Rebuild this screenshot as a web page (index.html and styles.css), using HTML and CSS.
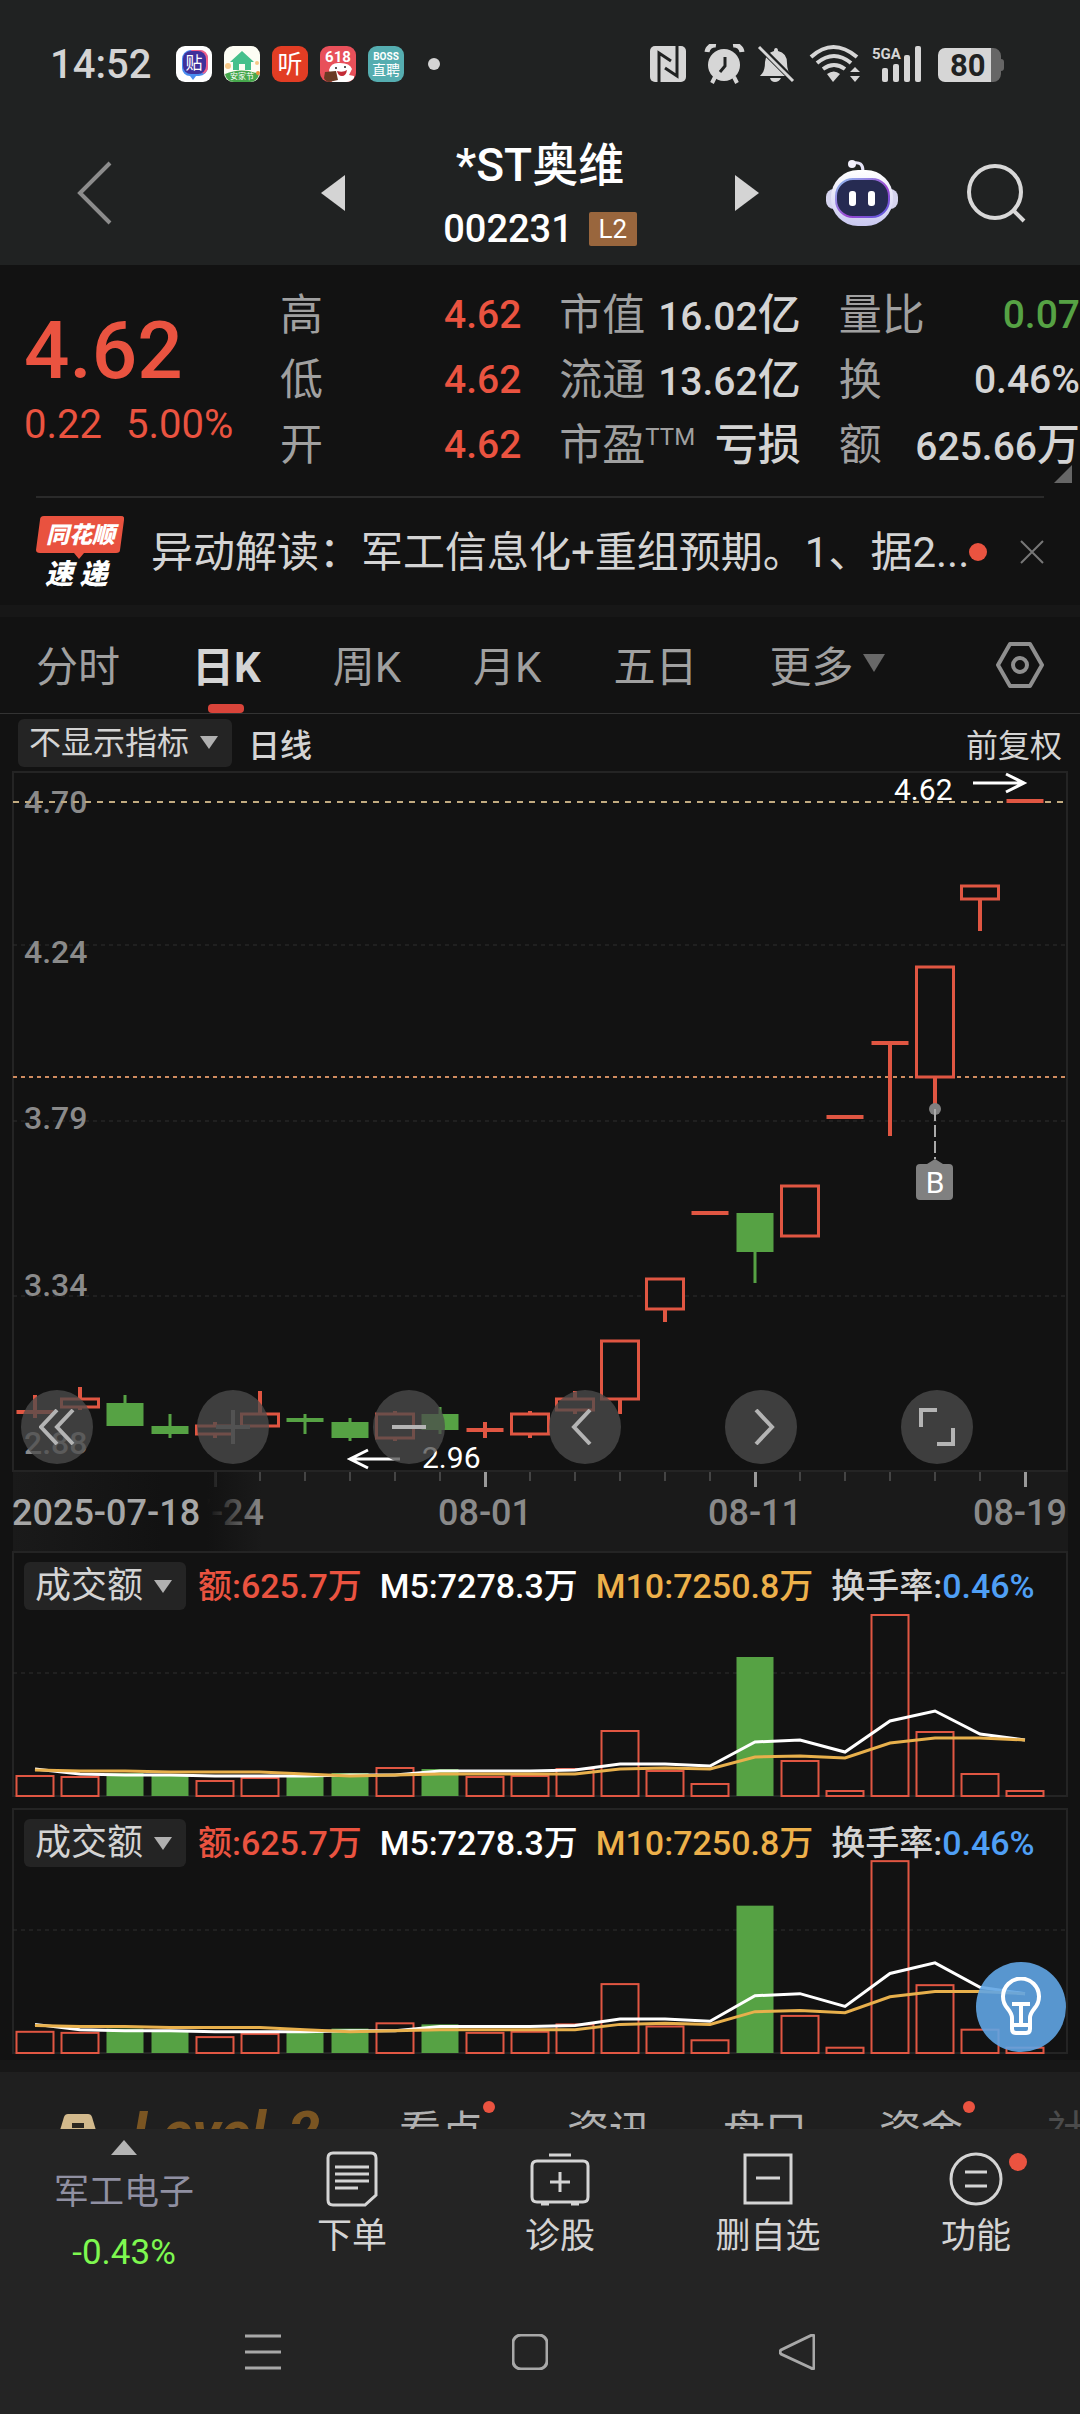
FILE: index.html
```html
<!DOCTYPE html>
<html lang="zh-CN">

<head>
  <meta charset="UTF-8">
  <meta name="viewport" content="width=device-width, initial-scale=1.0">
  <title>*ST奥维 002231</title>
  <link rel="stylesheet" href="styles.css">
</head>

<body>
  <div class="status-bar">
    <span class="status-bar__time">14:52</span>
    <div class="status-bar__apps">
      <svg width="36" height="36" viewBox="0 0 36 36">
        <rect width="36" height="36" rx="9" fill="#fff" />
        <path d="M14 4h9a9 9 0 0 1 9 9v8a9 9 0 0 1-9 9h-3l-3 4-3-4a8 8 0 0 1-8-8v-9a9 9 0 0 1 8-9z" fill="#4a8df0" />
        <path d="M15 4h9a8 8 0 0 1 8 8v8a8 8 0 0 1-5 8z" fill="#f0608a" />
        <rect x="7" y="5" width="23" height="23" rx="8" fill="#40309a" />
        <text class="app-text" x="18" y="23" font-size="17">贴</text>
      </svg>
      <svg width="36" height="36" viewBox="0 0 36 36">
        <rect width="36" height="36" rx="9" fill="#fdfdf4" />
        <path d="M1 28q16-7 34 0a9 9 0 0 1-9 8H10a9 9 0 0 1-9-8z" fill="#46a84c" />
        <path d="M18 5l12 11h-3v8h-6v-6h-6v6H9v-8H6z" fill="#45c08c" />
        <circle cx="4" cy="20" r="3" fill="#f7c887" />
        <circle cx="33" cy="17" r="2" fill="#f7c887" />
        <circle cx="34" cy="27" r="2" fill="#e8923a" />
        <text class="app-text" x="18" y="33" font-size="8">安家节</text>
      </svg>
      <svg width="36" height="36" viewBox="0 0 36 36">
        <rect width="36" height="36" rx="9" fill="#e23d24" />
        <text class="app-text" x="18" y="27" font-size="25">听</text>
      </svg>
      <svg width="36" height="36" viewBox="0 0 36 36">
        <rect width="36" height="36" rx="9" fill="#e8505a" />
        <text class="app-text app-text--latin" x="18" y="16" font-size="15">618</text>
        <path d="M9 24q2-8 11-7 10 0 12 6l-3 6 5 1v2q-3 4-8 4H12z" fill="#fff" />
        <path d="M17 25q6 2 10-1-1 6-5 6-4 0-5-5z" fill="#c22a35" />
        <circle cx="16" cy="22" r="1" fill="#222" />
        <circle cx="25" cy="21" r="1" fill="#222" />
        <path d="M5 26l11-1 2 9-9 2q-4-1-5-4z" fill="#6a3a24" />
      </svg>
      <svg width="36" height="36" viewBox="0 0 36 36">
        <rect width="36" height="36" rx="9" fill="#55adb0" />
        <text class="app-text app-text--latin" x="18" y="14" font-size="10">BOSS</text>
        <text class="app-text" x="18" y="29" font-size="14">直聘</text>
      </svg>
    </div>
    <span class="status-bar__dot"></span>
    <svg class="status-bar__system" width="356" height="40" viewBox="0 0 356 40" fill="#d6d6d6">
      <rect x="0" y="2" width="36" height="36" rx="5" />
      <path d="M9 38V9l12 8M27 2v30l-12-8" fill="none" stroke="#202222" stroke-width="3" />
      <path d="M57 8a8 8 0 0 1 9-7M92 8a8 8 0 0 0-9-7" fill="none" stroke="#d6d6d6" stroke-width="5" />
      <circle cx="74" cy="21" r="16" />
      <path d="M65 33l-3 6M84 33l3 6" stroke="#d6d6d6" stroke-width="4" />
      <path d="M75 13v9l-5 6" fill="none" stroke="#202222" stroke-width="3" />
      <path d="M110 32q5-4 5-14 1-9 9-11 0-3 2-3t2 3q9 2 9 12 0 9 5 13zM120 34h11q-2 4-6 4t-5-4z" />
      <path d="M108 1l36 36" stroke="#202222" stroke-width="6" />
      <path d="M109 3l34 34" stroke="#d6d6d6" stroke-width="3" />
      <path d="M161 13q22-20 46 0M167 19q17-14 34 0M173 25q11-8 22 0" fill="none" stroke="#d6d6d6" stroke-width="4" />
      <path d="M177 30q7-5 13 0l-7 8zM205 23l5 5h-10zM205 38l5-6h-10z" />
      <text x="222" y="15" font-size="15" font-weight="700">5GA</text>
      <rect x="232" y="24" width="6" height="14" rx="2" />
      <rect x="243" y="20" width="6" height="18" rx="2" />
      <rect x="254" y="11" width="6" height="27" rx="2" />
      <rect x="265" y="2" width="6" height="36" rx="2" />
      <path d="M338 4h5a8 8 0 0 1 8 8v3q3 0 3 3v6q0 3-3 3v3a8 8 0 0 1-8 8h-5z" fill="#666" />
      <path d="M295 4h46v34h-46a7 7 0 0 1-7-7V11a7 7 0 0 1 7-7z" />
      <text x="300" y="32" font-size="31" font-weight="700" fill="#202222">80</text>
    </svg>
  </div>

  <header class="title-bar">
    <button class="icon-button title-bar__back" type="button" aria-label="返回">
      <svg width="36" height="64" viewBox="0 0 36 64">
        <path d="M34 2L4 32l30 30" fill="none" stroke="#8c8c8c" stroke-width="4" />
      </svg>
    </button>
    <div class="title-bar__stock">
      <button class="icon-button" type="button" aria-label="上一只">
        <svg width="24" height="36" viewBox="0 0 24 36"><path d="M24 0v36L0 18z" fill="#d4d4d4" /></svg>
      </button>
      <div class="title-bar__text">
        <h1 class="title-bar__name">*ST奥维</h1>
        <p class="title-bar__code">002231<span class="title-bar__level">L2</span></p>
      </div>
      <button class="icon-button" type="button" aria-label="下一只">
        <svg width="24" height="36" viewBox="0 0 24 36"><path d="M0 0v36l24-18z" fill="#d4d4d4" /></svg>
      </button>
    </div>
    <div class="title-bar__actions">
      <button class="icon-button" type="button" aria-label="智能助手">
        <svg width="72" height="68" viewBox="0 0 72 68">
          <defs>
            <linearGradient id="shell" x1="0" y1="0" x2="0" y2="1">
              <stop offset="0" stop-color="#fff" />
              <stop offset="1" stop-color="#c9c8f0" />
            </linearGradient>
            <linearGradient id="rim" x1="0" y1="0" x2="1" y2="1">
              <stop offset="0" stop-color="#8fc0f0" />
              <stop offset="0.6" stop-color="#9a45d0" />
              <stop offset="1" stop-color="#5560e0" />
            </linearGradient>
          </defs>
          <path d="M27 4q10-2 10 8" fill="none" stroke="#e4e2f6" stroke-width="3" />
          <circle cx="26" cy="5" r="4" fill="#f2f0fc" />
          <rect x="0" y="30" width="72" height="20" rx="8" fill="#d5d4ee" />
          <rect x="5" y="11" width="62" height="56" rx="27" fill="url(#shell)" />
          <rect x="10" y="20" width="53" height="38" rx="17" fill="#262b52" stroke="url(#rim)" stroke-width="2" />
          <rect x="23" y="32" width="7" height="15" rx="3" fill="#fff" />
          <rect x="42" y="32" width="7" height="15" rx="3" fill="#fff" />
        </svg>
      </button>
      <button class="icon-button" type="button" aria-label="搜索">
        <svg width="60" height="60" viewBox="0 0 60 60" fill="none" stroke="#d8d8d8" stroke-width="4">
          <circle cx="29" cy="29" r="26" />
          <path d="M47 47l11 11" />
        </svg>
      </button>
    </div>
  </header>

  <section class="quote">
    <div class="quote__main">
      <p class="quote__price">4.62</p>
      <p class="quote__change"><span>0.22</span><span>5.00%</span></p>
    </div>
    <dl class="quote__stats">
      <div class="stat"><dt>高</dt><dd class="up">4.62</dd></div>
      <div class="stat"><dt>市值</dt><dd>16.02<span class="stat__unit">亿</span></dd></div>
      <div class="stat"><dt>量比</dt><dd class="down">0.07</dd></div>
      <div class="stat"><dt>低</dt><dd class="up">4.62</dd></div>
      <div class="stat"><dt>流通</dt><dd>13.62<span class="stat__unit">亿</span></dd></div>
      <div class="stat"><dt>换</dt><dd>0.46%</dd></div>
      <div class="stat"><dt>开</dt><dd class="up">4.62</dd></div>
      <div class="stat"><dt>市盈<sup>TTM</sup></dt><dd><span class="stat__unit">亏损</span></dd></div>
      <div class="stat"><dt>额</dt><dd>625.66<span class="stat__unit">万</span></dd></div>
    </dl>
    <span class="quote__expand"></span>
  </section>

  <section class="news">
    <svg class="news__logo" width="88" height="72" viewBox="0 0 88 72">
      <path d="M8 0h77q4 0 3 4l-4 30q0 3-4 3H48l-5 6-5-6H4q-4 0-4-3L4 4q0-4 4-4z" fill="#e9523f" />
      <text class="news__brand" x="10" y="27" font-size="23">同花顺</text>
      <text class="news__brand" x="9" y="68" font-size="28">速 递</text>
    </svg>
    <a class="news__text" href="#">异动解读：军工信息化+重组预期。1、据2...</a>
    <span class="news__dot"></span>
    <button class="icon-button" type="button" aria-label="关闭">
      <svg width="24" height="24" viewBox="0 0 24 24"><path d="M1 1l22 22M23 1L1 23" stroke="#777" stroke-width="2" /></svg>
    </button>
  </section>

  <nav class="tabs">
    <button class="tabs__item" type="button">分时</button>
    <button class="tabs__item tabs__item--active" type="button">日K</button>
    <button class="tabs__item" type="button">周K</button>
    <button class="tabs__item" type="button">月K</button>
    <button class="tabs__item" type="button">五日</button>
    <button class="tabs__item tabs__item--more" type="button">更多</button>
    <button class="icon-button tabs__settings" type="button" aria-label="设置">
      <svg width="48" height="46" viewBox="0 0 48 46" fill="none" stroke="#8f8f8f" stroke-width="4">
        <path d="M14 2h20l12 21-12 21H14L2 23z" stroke-linejoin="round" />
        <circle cx="24" cy="23" r="7" />
      </svg>
    </button>
  </nav>

  <div class="toolbar">
    <span class="dropdown dropdown--small">
      <select aria-label="指标"><option>不显示指标</option></select>
    </span>
    <strong class="toolbar__period">日线</strong>
    <button class="toolbar__adjust" type="button">前复权</button>
  </div>

  <section class="chart">
    <svg class="chart__plot" viewBox="0 0 1080 701">
      <rect class="frame" x="13" y="1" width="1054" height="699" />
      <g class="grid">
        <line x1="13" x2="1067" y1="174" y2="174" />
        <line x1="13" x2="1067" y1="350" y2="350" />
        <line x1="13" x2="1067" y1="525" y2="525" />
      </g>
      <g class="price-label">
        <text x="24" y="42">4.70</text>
        <text x="24" y="192">4.24</text>
        <text x="24" y="358">3.79</text>
        <text x="24" y="525">3.34</text>
        <text x="24" y="683">2.88</text>
      </g>
      <line class="level level--high" x1="13" x2="1067" y1="31" y2="31" />
      <line class="level level--cost" x1="13" x2="1067" y1="306" y2="306" />
      <g id="candles"></g>
      <g class="callout">
        <text x="894" y="29">4.62</text>
        <path d="M973 12h50M1006 3l18 9-18 9" />
        <text x="422" y="697">2.96</text>
        <path d="M400 688h-50M368 679l-18 9 18 9" />
      </g>
      <g class="buy">
        <circle cx="935" cy="338" r="6" />
        <line x1="935" x2="935" y1="338" y2="388" />
        <path d="M927 393l8-5 8 5h6q4 0 4 4v28q0 4-4 4h-29q-4 0-4-4v-28q0-4 4-4z" />
        <text x="935" y="422">B</text>
      </g>
    </svg>
    <div class="chart__controls">
      <button type="button" aria-label="最早"><svg width="36" height="36" viewBox="0 0 36 36"><path d="M18 1L2 18l16 17M34 1L18 18l16 17" /></svg></button>
      <button type="button" aria-label="放大" disabled><svg width="36" height="36" viewBox="0 0 36 36"><path d="M18 1v34M1 18h34" /></svg></button>
      <button type="button" aria-label="缩小"><svg width="36" height="36" viewBox="0 0 36 36"><path d="M1 18h34" /></svg></button>
      <button type="button" aria-label="左移"><svg width="36" height="36" viewBox="0 0 36 36"><path d="M23 1L7 18l16 17" /></svg></button>
      <button type="button" aria-label="右移"><svg width="36" height="36" viewBox="0 0 36 36"><path d="M13 1l16 17-16 17" /></svg></button>
      <button type="button" aria-label="全屏"><svg width="38" height="38" viewBox="0 0 38 38"><path d="M3 19V2h16M35 20v16H19" /></svg></button>
    </div>
  </section>

  <svg class="axis" viewBox="0 0 1080 79">
    <defs>
      <linearGradient id="axis-fade">
        <stop offset="0" stop-color="#1a1a1a" />
        <stop offset="0.6" stop-color="#121212" />
        <stop offset="0.78" stop-color="#121212" />
        <stop offset="1" stop-color="#121212" stop-opacity="0" />
      </linearGradient>
    </defs>
    <rect x="13" y="0" width="1055" height="79" fill="#1a1a1a" />
    <g id="ticks"></g>
    <text x="217" y="53" text-anchor="middle">07-24</text>
    <rect x="13" y="0" width="249" height="79" fill="url(#axis-fade)" />
    <text class="axis__start" x="12" y="53">2025-07-18</text>
    <text x="485" y="53" text-anchor="middle">08-01</text>
    <text x="755" y="53" text-anchor="middle">08-11</text>
    <text x="1067" y="53" text-anchor="end">08-19</text>
  </svg>

  <section class="volume">
    <svg class="volume__plot" viewBox="0 0 1080 246" data-scale="1"></svg>
    <div class="volume__head">
      <span class="dropdown">
        <select aria-label="副图一"><option>成交额</option></select>
      </span>
      <span class="up">额:625.7万</span>
      <span class="volume__m5">M5:7278.3万</span>
      <span class="volume__m10">M10:7250.8万</span>
      <span>换手率:<span class="volume__rate">0.46%</span></span>
    </div>
  </section>

  <section class="volume volume--last">
    <svg class="volume__plot" viewBox="0 0 1080 246" data-scale="1.06"></svg>
    <div class="volume__head">
      <span class="dropdown">
        <select aria-label="副图二"><option>成交额</option></select>
      </span>
      <span class="up">额:625.7万</span>
      <span class="volume__m5">M5:7278.3万</span>
      <span class="volume__m10">M10:7250.8万</span>
      <span>换手率:<span class="volume__rate">0.46%</span></span>
    </div>
    <button class="tip" type="button" aria-label="提示">
      <svg width="42" height="60" viewBox="0 0 42 60" fill="none" stroke="#fff" stroke-width="4">
        <path d="M12 52V41q0-4-4-9a18 18 0 1 1 26 0q-4 5-4 9v11q0 4-4 4H16q-4 0-4-4zM12 48h18M12 27h18M21 27v19" />
      </svg>
    </button>
  </section>

  <nav class="sections">
    <a class="sections__level" href="#">
      <svg width="40" height="40" viewBox="0 0 40 40"><path d="M10 0h20q3 0 4 3l6 20-20 17L0 23 6 3q1-3 4-3z" fill="#d2b98c" /><path d="M14 9h12v5H14z" fill="#2b2720" /></svg>
      <span>Level-2</span>
    </a>
    <a class="sections__item sections__item--new" href="#">看点</a>
    <a class="sections__item" href="#">资讯</a>
    <a class="sections__item" href="#">盘口</a>
    <a class="sections__item sections__item--new" href="#">资金</a>
    <a class="sections__item sections__item--faded" href="#">社区</a>
  </nav>

  <footer class="bottom">
    <div class="actions">
      <button class="actions__sector" type="button">
        <span class="actions__arrow"></span>
        <span>军工电子</span>
        <span class="actions__percent">-0.43%</span>
      </button>
      <button class="actions__item" type="button">
        <svg width="54" height="56" viewBox="0 0 54 56">
          <path d="M8 2h38q5 0 5 5v37l-11 10H8q-5 0-5-5V7q0-5 5-5zM10 16h34M10 23h34M10 30h34M10 37h23" />
        </svg>
        下单
      </button>
      <button class="actions__item" type="button">
        <svg width="60" height="56" viewBox="0 0 60 56">
          <path d="M7 10h46q5 0 5 5v31q0 5-5 5H7q-5 0-5-5V15q0-5 5-5zM19 4h22M11 53h8M41 53h8M30 21v20M20 31h20" />
        </svg>
        诊股
      </button>
      <button class="actions__item" type="button">
        <svg width="54" height="56" viewBox="0 0 54 56">
          <path d="M4 4h46v48H4zM15 27h24" />
        </svg>
        删自选
      </button>
      <button class="actions__item actions__item--new" type="button">
        <svg width="54" height="56" viewBox="0 0 54 56">
          <circle cx="27" cy="28" r="25" />
          <path d="M16 21h22M16 35h22" />
        </svg>
        功能
      </button>
    </div>
    <div class="system-nav">
      <button class="icon-button" type="button" aria-label="最近任务">
        <svg width="36" height="36" viewBox="0 0 36 36"><path d="M0 2h36M0 18h36M0 34h36" /></svg>
      </button>
      <button class="icon-button" type="button" aria-label="主屏幕">
        <svg width="36" height="36" viewBox="0 0 36 36"><rect x="1" y="1" width="34" height="34" rx="8" /></svg>
      </button>
      <button class="icon-button" type="button" aria-label="后退">
        <svg width="36" height="36" viewBox="0 0 36 36"><path d="M33 1q2 0 2 2v30q0 3-3 1L2 20q-2-2 0-4z" /></svg>
      </button>
    </div>
  </footer>

  <script>
    const firstX = 35;
    const step = 45;
    const barWidth = 37;

    // [rising, body top, body bottom, high, low]
    const candles = [
      [1, 641, 641, 624, 647], [1, 628, 636, 616, 639], [0, 632, 655, 624, 655],
      [0, 655, 663, 643, 667], [1, 655, 663, 651, 667], [1, 643, 655, 620, 655],
      [0, 647, 651, 643, 663], [0, 651, 667, 647, 670], [1, 643, 667, 640, 670],
      [0, 643, 659, 636, 663], [1, 659, 659, 651, 667], [1, 643, 663, 640, 667],
      [1, 628, 639, 620, 643], [1, 570, 628, 570, 643], [1, 508, 538, 508, 551],
      [1, 442, 442, 442, 442], [0, 442, 481, 442, 512], [1, 415, 465, 415, 465],
      [1, 346, 346, 346, 346], [1, 272, 272, 272, 365], [1, 196, 306, 196, 338],
      [1, 115, 128, 115, 160], [1, 30, 30, 30, 30]
    ];

    const volumes = [20, 19, 23, 20, 15, 18, 21, 23, 28, 27, 19, 20, 27, 65, 25, 12, 139, 35, 5, 181, 64, 22, 5];
    const m5 = [27, 22, 21, 21, 20, 20, 20, 21, 21, 25, 25, 25, 26, 32, 32, 30, 54, 56, 44, 75, 85, 62, 56];
    const m10 = [26, 25, 25, 24, 24, 24, 22, 20, 21, 22, 22, 22, 22, 27, 28, 27, 39, 40, 38, 53, 58, 58, 56];

    const centerX = (index) => firstX + step * index;

    function drawCandle([rising, top, bottom, high, low], index) {
      const x = centerX(index);
      const left = x - barWidth / 2;
      const className = rising ? "bar--up" : "bar--down";
      const body = top === bottom
        ? `<line x1="${left}" x2="${left + barWidth}" y1="${top}" y2="${top}" />`
        : `<rect x="${left}" y="${top}" width="${barWidth}" height="${bottom - top}" />`;
      return `<g class="${className}">
        ${high < top ? `<line x1="${x}" x2="${x}" y1="${high}" y2="${top}" />` : ""}
        ${low > bottom ? `<line x1="${x}" x2="${x}" y1="${bottom}" y2="${low}" />` : ""}
        ${body}
      </g>`;
    }

    function drawVolume(svg) {
      const scale = Number(svg.dataset.scale);
      const base = 245;
      const points = (values) => values.map((v, i) => `${centerX(i)},${base - v * scale}`).join(" ");
      const bars = volumes.map((v, i) => {
        const height = v * scale;
        const className = candles[i][0] ? "bar--up" : "bar--down";
        return `<rect class="${className}" x="${centerX(i) - barWidth / 2}" y="${base - height}" width="${barWidth}" height="${height}" />`;
      });
      svg.innerHTML = `
        <rect class="frame" x="13" y="1" width="1054" height="244" />
        <line class="grid" x1="13" x2="1067" y1="122" y2="122" />
        <g class="volume__bars">${bars.join("")}</g>
        <polyline class="line line--m5" points="${points(m5)}" />
        <polyline class="line line--m10" points="${points(m10)}" />`;
    }

    function drawTicks() {
      let ticks = "";
      for (let i = 4; i < candles.length; i++) {
        const major = (i - 4) % 6 === 0;
        ticks += `<rect x="${centerX(i) - 1}" y="0" width="${major ? 3 : 2}" height="${major ? 15 : 9}" fill="${major ? "#999" : "#444"}" />`;
      }
      return ticks;
    }

    document.querySelector("#candles").innerHTML = candles.map(drawCandle).join("");
    document.querySelector("#ticks").innerHTML = drawTicks();
    document.querySelectorAll(".volume__plot").forEach(drawVolume);
  </script>
</body>

</html>
```

FILE: styles.css
```css
:root {
  --red: #ea5340;
  --green: #56a244;
  --text: #d4d4d4;
  --muted: #a0a0a0;
  --bg: #121212;
  --frame: #242424;
}

* {
  box-sizing: border-box;
}

body {
  margin: 0;
  background-color: var(--bg);
  color: var(--text);
  font-family: Roboto, "Noto Sans CJK SC", sans-serif;
}

h1,
p,
dl,
dd {
  margin: 0;
}

button,
select {
  padding: 0;
  border: 0;
  background: none;
  color: inherit;
  font: inherit;
}

a {
  color: inherit;
  text-decoration: none;
}

svg {
  display: block;
}

.icon-button {
  flex: 0 0 auto;
}

.up {
  color: var(--red);
}

.down {
  color: var(--green);
}

/* Status bar */

.status-bar {
  display: flex;
  align-items: center;
  height: 128px;
  padding: 0 74px 0 50px;
  background-color: #202222;
}

.status-bar__time {
  width: 126px;
  font-size: 40px;
  font-weight: 500;
}

.status-bar__apps {
  display: flex;
  gap: 12px;
}

.app-text {
  fill: #fff;
  font-family: "Noto Sans CJK SC", sans-serif;
  text-anchor: middle;
}

.app-text--latin {
  font-family: Roboto, sans-serif;
  font-weight: 700;
}

.status-bar__dot {
  width: 12px;
  height: 12px;
  margin-left: 24px;
  border-radius: 50%;
  background-color: var(--text);
}

.status-bar__system {
  margin-left: auto;
}

/* Title bar */

.title-bar {
  display: grid;
  grid-template-columns: 1fr 438px 1fr;
  align-items: center;
  height: 137px;
  background-color: #202222;
}

.title-bar .icon-button {
  margin-bottom: 8px;
}

.title-bar__back {
  justify-self: start;
  margin-left: 76px;
}

.title-bar__stock {
  display: flex;
  align-items: center;
  justify-content: space-between;
}

.title-bar__text {
  color: #fff;
  text-align: center;
}

.title-bar__name {
  font-size: 46px;
  font-weight: 500;
  line-height: 64px;
}

.title-bar__code {
  display: flex;
  align-items: center;
  gap: 16px;
  font-size: 38px;
  font-weight: 500;
  line-height: 64px;
}

.title-bar__level {
  width: 48px;
  border-radius: 2px;
  background-color: #99663d;
  font-size: 26px;
  font-weight: 400;
  line-height: 34px;
}

.title-bar__actions {
  display: flex;
  align-items: center;
  justify-content: flex-end;
  gap: 68px;
  padding-right: 54px;
}

/* Quote */

.quote {
  position: relative;
  display: grid;
  grid-template-columns: 256px 1fr;
  padding: 18px 0 18px 24px;
}

.quote__main {
  padding-top: 26px;
  color: var(--red);
}

.quote__price {
  font-size: 80px;
  font-weight: 500;
  line-height: 84px;
}

.quote__change {
  display: flex;
  gap: 24px;
  font-size: 40px;
  line-height: 64px;
}

.quote__stats {
  display: grid;
  grid-template-columns: repeat(3, 1fr);
  grid-auto-rows: 65px;
  column-gap: 38px;
}

.stat {
  display: flex;
  justify-content: space-between;
  line-height: 64px;
  white-space: nowrap;
}

.stat dt {
  color: var(--muted);
  font-size: 43px;
}

.stat dd {
  font-size: 39px;
  font-weight: 500;
}

.stat sup {
  font-size: 24px;
  line-height: 0;
}

.stat__unit {
  font-size: 43px;
}

.quote__expand {
  position: absolute;
  right: 8px;
  bottom: 13px;
  border-bottom: 18px solid #666;
  border-left: 18px solid transparent;
}

/* News */

.news {
  display: flex;
  align-items: center;
  height: 109px;
  margin: 0 36px;
  border-top: 2px solid #2a2a2a;
}

.news__logo {
  flex: 0 0 auto;
}

.news__brand {
  fill: #fff;
  font-family: "Noto Sans CJK SC", sans-serif;
  font-style: italic;
  font-weight: 900;
}

.news__text {
  margin-bottom: 6px;
  margin-left: 27px;
  font-size: 42px;
  white-space: nowrap;
}

.news__dot {
  flex: 0 0 auto;
  width: 18px;
  height: 18px;
  margin-right: auto;
  border-radius: 50%;
  background-color: var(--red);
}

/* Period tabs */

.tabs {
  display: flex;
  align-items: center;
  gap: 72px;
  height: 109px;
  padding: 0 36px;
  border-top: 12px solid #171717;
  border-bottom: 1px solid #333;
}

.tabs__item {
  position: relative;
  height: 96px;
  padding-bottom: 4px;
  color: var(--muted);
  font-size: 42px;
  white-space: nowrap;
}

.tabs__item--active {
  color: var(--text);
  font-weight: 700;
}

.tabs__item--active::after {
  content: "";
  position: absolute;
  bottom: 0;
  left: 50%;
  width: 36px;
  height: 9px;
  margin-left: -18px;
  border-radius: 4px;
  background-color: #d9443a;
}

.tabs__item--more {
  display: flex;
  align-items: center;
  gap: 10px;
}

.tabs__item--more::after {
  content: "";
  border: 11px solid transparent;
  border-top: 18px solid #686868;
  border-bottom: 0;
}

.tabs__settings {
  margin-left: auto;
}

/* Toolbar above the chart */

.toolbar {
  display: flex;
  align-items: center;
  gap: 16px;
  height: 57px;
  padding: 0 18px;
  font-size: 32px;
}

.dropdown {
  position: relative;
  display: inline-flex;
  align-items: center;
  border-radius: 6px;
  background-color: #242424;
  color: var(--text);
  font-size: 36px;
}

.dropdown--small {
  font-size: 32px;
}

.dropdown select {
  height: 48px;
  padding: 0 42px 0 11px;
  line-height: 48px;
  appearance: none;
}

.dropdown::after {
  content: "";
  position: absolute;
  right: 14px;
  border: 9px solid transparent;
  border-top: 13px solid #b0b0b0;
  border-bottom: 0;
  pointer-events: none;
}

.toolbar__period {
  font-weight: 500;
}

.toolbar__adjust {
  margin-left: auto;
}

/* Candle chart */

.chart,
.volume {
  position: relative;
  display: grid;
}

.chart__plot,
.chart__controls,
.volume__plot,
.volume__head {
  grid-area: 1 / 1;
}

.chart__plot,
.volume__plot,
.axis {
  width: 100%;
}

.frame {
  fill: none;
  stroke: var(--frame);
  stroke-width: 2;
}

.grid {
  stroke: #2e2e2e;
  stroke-dasharray: 4 4;
}

.level {
  stroke-width: 2;
}

.level--high {
  stroke: #c2ab80;
  stroke-dasharray: 6 6;
}

.level--cost {
  stroke: #d08c60;
  stroke-dasharray: 4 4;
}

.price-label {
  fill: #8a8a8a;
  font-size: 32px;
  font-weight: 500;
}

.bar--up {
  fill: none;
  stroke: #e05642;
  stroke-width: 4;
}

.bar--up rect {
  fill: var(--bg);
  stroke-width: 3;
}

.bar--down {
  fill: var(--green);
  stroke: var(--green);
  stroke-width: 3;
}

.bar--down rect {
  stroke: none;
}

.callout {
  fill: #fff;
  font-size: 30px;
}

.callout path {
  fill: none;
  stroke: #fff;
  stroke-width: 3;
}

.buy {
  fill: #808080;
  font-size: 30px;
  text-anchor: middle;
}

.buy line {
  stroke: #aaa;
  stroke-width: 2;
  stroke-dasharray: 12 4;
}

.buy text {
  fill: #fff;
}

.chart__controls {
  display: flex;
  align-self: end;
  gap: 104px;
  padding: 0 21px 8px;
}

.chart__controls button {
  display: flex;
  align-items: center;
  justify-content: center;
  width: 72px;
  height: 74px;
  border-radius: 50%;
  background-color: rgba(76, 76, 76, 0.76);
}

.chart__controls path {
  fill: none;
  stroke: #b4b4b4;
  stroke-width: 4;
}

.chart__controls button:disabled path {
  stroke: #525252;
}

.axis {
  fill: #8a8a8a;
  font-size: 36px;
  font-weight: 500;
}

.axis__start {
  fill: #a6a6a6;
}

/* Turnover charts */

.volume--last {
  margin: 11px 0 6px;
}

.volume__head {
  display: flex;
  align-items: center;
  align-self: start;
  gap: 18px;
  padding: 11px 24px 0;
  font-size: 34px;
  font-weight: 500;
  line-height: 48px;
  white-space: nowrap;
}

.volume__head .dropdown {
  margin-right: -6px;
  font-weight: 400;
}

.volume__m5 {
  color: #fff;
}

.volume__m10 {
  color: #edb04a;
}

.volume__rate {
  color: #4f9ff5;
}

.volume__bars .bar--up {
  stroke-width: 2;
}

.volume__bars .bar--down {
  stroke: none;
}

.line {
  fill: none;
  stroke-width: 3;
}

.line--m5 {
  stroke: #fff;
}

.line--m10 {
  stroke: #e8b04c;
}

.tip {
  position: absolute;
  right: 14px;
  bottom: 2px;
  display: flex;
  align-items: center;
  justify-content: center;
  width: 90px;
  height: 90px;
  border-radius: 50%;
  background-color: rgba(97, 165, 228, 0.9);
}

/* Section links, cut off by the bottom bar */

.sections {
  display: flex;
  gap: 72px;
  height: 69px;
  padding-left: 58px;
  overflow: hidden;
  border-top: 12px solid #171717;
  background-color: #1f1f1f;
  color: #b0b0b0;
  font-size: 42px;
  line-height: 120px;
  white-space: nowrap;
}

.sections__level {
  display: flex;
  flex: 0 0 auto;
  gap: 34px;
  width: 269px;
  color: #7a5522;
  font-size: 58px;
  font-style: italic;
  font-weight: 700;
}

.sections__level svg {
  flex: 0 0 auto;
  margin-top: 42px;
}

.sections__item {
  flex: 0 0 auto;
}

.sections__item--new {
  display: flex;
}

.sections__item--new::after {
  content: "";
  width: 12px;
  height: 12px;
  margin-top: 29px;
  border-radius: 50%;
  background-color: var(--red);
}

.sections__item--faded {
  opacity: 0.3;
}

/* Bottom bar */

.bottom {
  background-color: #242424;
}

.actions {
  display: grid;
  grid-template-columns: 248px repeat(4, 1fr);
  height: 185px;
  font-size: 35px;
}

.actions__sector {
  display: flex;
  flex-direction: column;
  align-items: center;
  padding-top: 11px;
  color: #9090a2;
  line-height: 60px;
}

.actions__arrow {
  margin-bottom: 8px;
  border: 13px solid transparent;
  border-top: 0;
  border-bottom: 15px solid #b4b4b4;
}

.actions__percent {
  color: #7ef850;
}

.actions__item {
  position: relative;
  display: flex;
  flex-direction: column;
  align-items: center;
  gap: 4px;
  padding-top: 22px;
  line-height: 52px;
}

.actions__item svg {
  fill: none;
  stroke: #d4d4d4;
  stroke-width: 3;
}

.actions__item--new::after {
  content: "";
  position: absolute;
  top: 24px;
  left: 50%;
  width: 18px;
  height: 18px;
  margin-left: 33px;
  border-radius: 50%;
  background-color: var(--red);
}

.system-nav {
  display: flex;
  justify-content: space-between;
  height: 100px;
  padding: 20px 265px 0 245px;
}

.system-nav svg {
  fill: none;
  stroke: #a8a8a8;
  stroke-width: 3;
}

.system-nav button {
  height: 36px;
}
```
